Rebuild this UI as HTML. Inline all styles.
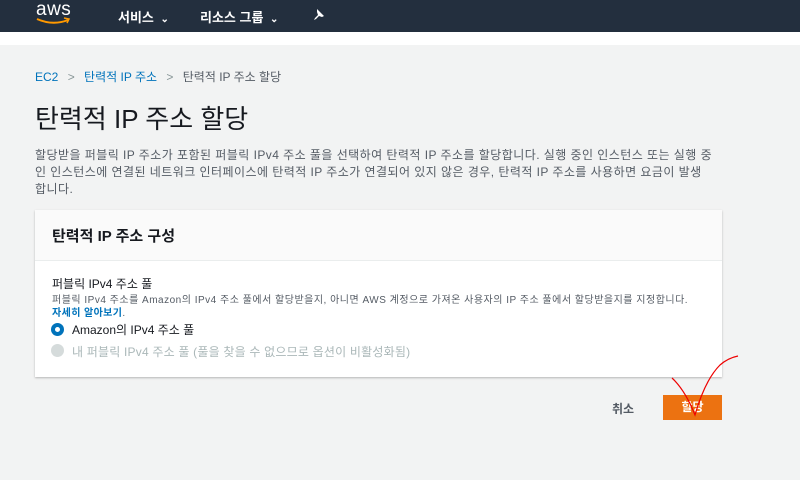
<!DOCTYPE html>
<html><head><meta charset="utf-8"><style>
body{margin:0;width:800px;height:480px;overflow:hidden;background:#f2f3f3;font-family:"Liberation Sans","Noto Sans CJK KR",sans-serif;position:relative}
.nav{position:absolute;left:0;top:0;width:800px;height:32px;background:#232f3e;color:#fff}
.white{position:absolute;top:32px;left:0;width:800px;height:13px;background:#fff}
.a{position:absolute;white-space:nowrap}
.card{position:absolute;left:35px;top:210px;width:687px;height:167px;background:#fff;box-shadow:0 1px 2px rgba(0,0,0,.25)}
.ch{height:50px;background:#fafafa;border-bottom:1px solid #eaeded}
</style></head><body>
<div class="nav">
<div class="a" style="left:36px;top:-1px;font-size:19px;letter-spacing:0.5px">aws</div>
<svg class="a" style="left:35px;top:17px" width="38" height="9"><path d="M2 2 Q18 9 33 3" stroke="#f90" stroke-width="2" fill="none"/><path d="M29 1 L34 2 L32 6" stroke="#f90" stroke-width="1.5" fill="none"/></svg>
<div class="a" style="left:118px;top:7px;font-size:13px;font-weight:bold">서비스 <span style="font-size:10px;margin-left:3px">⌄</span></div>
<div class="a" style="left:200px;top:7px;font-size:13px;font-weight:bold">리소스 그룹 <span style="font-size:10px;margin-left:3px">⌄</span></div>
<svg class="a" style="left:312px;top:8px" width="14" height="14"><path d="M5 1 L12 8 L10 9 L7 8 L4 11 L2 12 L3 10 L6 7 L5 4 Z" fill="#fff"/></svg>
</div>
<div class="white"></div>
<div class="a" style="left:35px;top:68px;font-size:12px;color:#0073bb">EC2 <span style="color:#879596;margin:0 6px">&gt;</span> 탄력적 IP 주소 <span style="color:#879596;margin:0 6px">&gt;</span> <span style="color:#545b64">탄력적 IP 주소 할당</span></div>
<div class="a" style="left:35px;top:99px;font-size:26px;color:#16191f">탄력적 IP 주소 할당</div>
<div class="a" style="left:35px;top:147px;font-size:12px;line-height:17px;color:#545b64;letter-spacing:0.45px">할당받을 퍼블릭 IP 주소가 포함된 퍼블릭 IPv4 주소 풀을 선택하여 탄력적 IP 주소를 할당합니다. 실행 중인 인스턴스 또는 실행 중<br>인 인스턴스에 연결된 네트워크 인터페이스에 탄력적 IP 주소가 연결되어 있지 않은 경우, 탄력적 IP 주소를 사용하면 요금이 발생<br>합니다.</div>
<div class="card"><div class="ch"></div></div>
<div class="a" style="left:52px;top:225px;font-size:15px;font-weight:bold;color:#16191f">탄력적 IP 주소 구성</div>
<div class="a" style="left:52px;top:275px;font-size:12px;color:#16191f">퍼블릭 IPv4 주소 풀</div>
<div class="a" style="left:52px;top:291px;font-size:10px;color:#545b64;letter-spacing:0.5px">퍼블릭 IPv4 주소를 Amazon의 IPv4 주소 풀에서 할당받을지, 아니면 AWS 계정으로 가져온 사용자의 IP 주소 풀에서 할당받을지를 지정합니다.</div>
<div class="a" style="left:52px;top:304px;font-size:10px;color:#0073bb;font-weight:bold;letter-spacing:0.4px">자세히 알아보기<span style="color:#545b64;font-weight:normal">.</span></div>
<div class="a" style="left:51px;top:323px;width:5px;height:5px;border:4px solid #0073bb;border-radius:50%"></div>
<div class="a" style="left:72px;top:321px;font-size:12px;color:#16191f">Amazon의 IPv4 주소 풀</div>
<div class="a" style="left:51px;top:344px;width:13px;height:13px;background:#d5dbdb;border-radius:50%"></div>
<div class="a" style="left:72px;top:343px;font-size:12px;color:#aab7b8;letter-spacing:0.2px">내 퍼블릭 IPv4 주소 풀 (풀을 찾을 수 없으므로 옵션이 비활성화됨)</div>
<div class="a" style="left:612px;top:400px;font-size:12px;color:#545b64;font-weight:bold">취소</div>
<div class="a" style="left:663px;top:395px;width:59px;height:25px;background:#ec7211;color:#fff;font-size:12px;font-weight:bold;text-align:center;line-height:25px">할당</div>
<svg class="a" style="left:660px;top:350px" width="90" height="70"><path d="M12 28 Q25 40 35 65 Q45 30 60 15 Q68 8 78 6" stroke="#e00" stroke-width="1.2" fill="none"/></svg>
</body></html>
